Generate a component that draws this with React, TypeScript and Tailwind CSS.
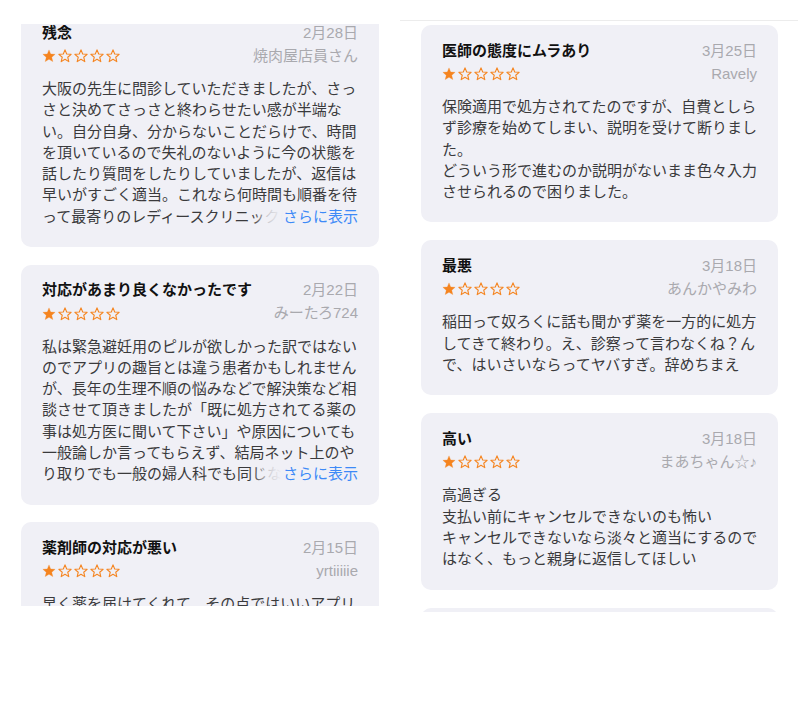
type Review = {
  title: string;
  date: string;
  author: string;
  body: string;
  more?: boolean;
};

const leftReviews: Review[] = [
  {
    title: "残念",
    date: "2月28日",
    author: "焼肉屋店員さん",
    body:
      "大阪の先生に問診していただきましたが、さっさと決めてさっさと終わらせたい感が半端ない。自分自身、分からないことだらけで、時間を頂いているので失礼のないように今の状態を話したり質問をしたりしていましたが、返信は早いがすごく適当。これなら何時間も順番を待って最寄りのレディースクリニックに行った方がよかったです。",
    more: true,
  },
  {
    title: "対応があまり良くなかったです",
    date: "2月22日",
    author: "みーたろ724",
    body:
      "私は緊急避妊用のピルが欲しかった訳ではないのでアプリの趣旨とは違う患者かもしれませんが、長年の生理不順の悩みなどで解決策など相談させて頂きましたが「既に処方されてる薬の事は処方医に聞いて下さい」や原因についても一般論しか言ってもらえず、結局ネット上のやり取りでも一般の婦人科でも同じなのだと感じました。",
    more: true,
  },
  {
    title: "薬剤師の対応が悪い",
    date: "2月15日",
    author: "yrtiiiiie",
    body: "早く薬を届けてくれて、その点ではいいアプリだと思いますが、薬剤師の対応が悪いです。",
  },
];

const rightReviews: Review[] = [
  {
    title: "医師の態度にムラあり",
    date: "3月25日",
    author: "Ravely",
    body:
      "保険適用で処方されてたのですが、自費としらず診療を始めてしまい、説明を受けて断りました。\nどういう形で進むのか説明がないまま色々入力させられるので困りました。",
  },
  {
    title: "最悪",
    date: "3月18日",
    author: "あんかやみわ",
    body:
      "稲田って奴ろくに話も聞かず薬を一方的に処方してきて終わり。え、診察って言わなくね？んで、はいさいならってヤバすぎ。辞めちまえ",
  },
  {
    title: "高い",
    date: "3月18日",
    author: "まあちゃん☆♪",
    body:
      "高過ぎる\n支払い前にキャンセルできないのも怖い\nキャンセルできないなら淡々と適当にするのではなく、もっと親身に返信してほしい",
  },
  {
    title: "使いにくい",
    date: "3月10日",
    author: "user",
    body: "アプリが使いにくいです。",
  },
];

function Star({ filled }: { filled: boolean }) {
  return (
    <svg width="14" height="14" viewBox="0 0 24 24">
      <polygon
        points="12,1.5 14.9,8.5 22.5,9.1 16.7,14.1 18.5,21.6 12,17.6 5.5,21.6 7.3,14.1 1.5,9.1 9.1,8.5"
        fill={filled ? "#f5841f" : "none"}
        stroke="#f5841f"
        strokeWidth={filled ? 0.5 : 1.9}
        strokeLinejoin="round"
      />
    </svg>
  );
}

function ReviewCard({ r }: { r: Review }) {
  return (
    <div className="rounded-[10px] bg-[#f0f0f6] px-[21px] pt-[16px] pb-[20px]">
      {/* title + date */}
      <div className="flex items-center justify-between h-[20px]">
        <span className="text-[15px] font-semibold text-[#111]">{r.title}</span>
        <span className="text-[15px] text-[#a9a9ae]">{r.date}</span>
      </div>
      {/* stars + author */}
      <div className="mt-[3px] flex items-center justify-between h-[20px]">
        <div className="flex gap-[2px]">
          {[0, 1, 2, 3, 4].map((i) => (
            <Star key={i} filled={i === 0} />
          ))}
        </div>
        <span className="text-[15px] text-[#a9a9ae]">{r.author}</span>
      </div>
      <div className="relative mt-[12px] -mr-[3px]">
        <p className="max-h-[149.1px] overflow-hidden whitespace-pre-line text-[15px] leading-[21.3px] text-[#3a3a3c]">
          {r.body}
        </p>
        {r.more && (
          <span className="absolute right-[3px] bottom-0 flex h-[21.3px]">
            <span className="w-[30px] bg-linear-to-r from-transparent via-[#f0f0f6]/80 to-[#f0f0f6]" />
            <span className="bg-[#f0f0f6] text-[15px] leading-[21.3px] text-[#3d8af7]">さらに表示</span>
          </span>
        )}
      </div>
    </div>
  );
}

export default function App() {
  return (
    <div className="flex w-[800px] h-[711px] bg-white font-['Liberation_Sans','Noto_Sans_CJK_JP',sans-serif]">
      {/* Left screenshot */}
      <div className="w-[400px] pt-[24px]">
        <div className="h-[582px] overflow-hidden">
          <div className="-mt-[17px] flex flex-col gap-[17.5px] px-[21px]">
            {leftReviews.map((r) => (
              <ReviewCard key={r.title} r={r} />
            ))}
          </div>
        </div>
      </div>

      {/* Right screenshot */}
      <div className="w-[398px] pt-[20px]">
        <div className="h-[592px] overflow-hidden border-t border-[#ececec]">
          <div className="flex flex-col gap-[18px] pl-[21px] pr-[20px] pt-[4px]">
            {rightReviews.map((r) => (
              <ReviewCard key={r.title} r={r} />
            ))}
          </div>
        </div>
      </div>
    </div>
  );
}
